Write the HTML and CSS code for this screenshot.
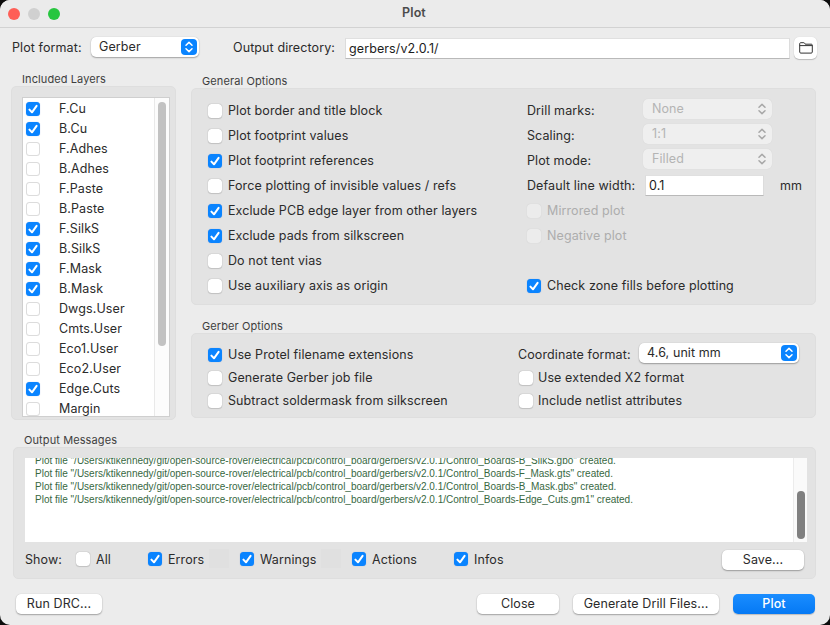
FILE: index.html
```html
<!DOCTYPE html>
<html lang="en">
<head>
<meta charset="utf-8">
<title>Plot</title>
<link rel="stylesheet" href="styles.css">
</head>
<body>
<svg class="defs" width="0" height="0" aria-hidden="true">
  <symbol id="check" viewBox="0 0 14 14"><path d="M3.4 7.6 6 10.3 10.6 3.9" fill="none" stroke="#fff" stroke-width="2" stroke-linecap="round" stroke-linejoin="round"/></symbol>
  <symbol id="updown" viewBox="0 0 16 16"><path d="M5 6.2 8 3.4l3 2.8M5 9.8l3 2.8 3-2.8" fill="none" stroke="currentColor" stroke-width="1.5" stroke-linecap="round" stroke-linejoin="round"/></symbol>
</svg>
<div class="window">
  <header class="titlebar">
    <div class="lights"><i class="light red"></i><i class="light grey"></i><i class="light green"></i></div>
    <div class="title">Plot</div>
  </header>

  <div class="toprow">
    <span class="lbl">Plot format:</span>
    <div class="select format"><span>Gerber</span><b class="stepper"><svg><use href="#updown"/></svg></b></div>
    <span class="lbl outdir">Output directory:</span>
    <div class="input path">gerbers/v2.0.1/</div>
    <div class="folder">
      <svg width="14" height="12" viewBox="0 0 14 12"><path d="M.7 10V1.6c0-.5.4-.9.9-.9h3.2c.4 0 .6.2.8.5l.6 1h6.2c.5 0 .9.4.9.9V10c0 .7-.4 1.1-1.1 1.1H1.8C1.1 11.1.7 10.7.7 10Z M.7 3.6h12.6" fill="none" stroke="#333" stroke-width="1"/></svg>
    </div>
  </div>

  <div class="middle">
    <section class="layers">
      <h2 class="cap">Included Layers</h2>
      <div class="panel layerpanel">
        <div class="list">
          <div class="rows">
            <label class="lrow"><span class="cb on"><svg><use href="#check"/></svg></span><span>F.Cu</span></label>
            <label class="lrow"><span class="cb on"><svg><use href="#check"/></svg></span><span>B.Cu</span></label>
            <label class="lrow"><span class="cb"></span><span>F.Adhes</span></label>
            <label class="lrow"><span class="cb"></span><span>B.Adhes</span></label>
            <label class="lrow"><span class="cb"></span><span>F.Paste</span></label>
            <label class="lrow"><span class="cb"></span><span>B.Paste</span></label>
            <label class="lrow"><span class="cb on"><svg><use href="#check"/></svg></span><span>F.SilkS</span></label>
            <label class="lrow"><span class="cb on"><svg><use href="#check"/></svg></span><span>B.SilkS</span></label>
            <label class="lrow"><span class="cb on"><svg><use href="#check"/></svg></span><span>F.Mask</span></label>
            <label class="lrow"><span class="cb on"><svg><use href="#check"/></svg></span><span>B.Mask</span></label>
            <label class="lrow"><span class="cb"></span><span>Dwgs.User</span></label>
            <label class="lrow"><span class="cb"></span><span>Cmts.User</span></label>
            <label class="lrow"><span class="cb"></span><span>Eco1.User</span></label>
            <label class="lrow"><span class="cb"></span><span>Eco2.User</span></label>
            <label class="lrow"><span class="cb on"><svg><use href="#check"/></svg></span><span>Edge.Cuts</span></label>
            <label class="lrow"><span class="cb"></span><span>Margin</span></label>
          </div>
          <div class="ltrack"><div class="lthumb"></div></div>
        </div>
      </div>
    </section>

    <div class="options">
      <section>
        <h2 class="cap">General Options</h2>
        <div class="panel general">
          <label class="opt"><span class="cb"></span><span>Plot border and title block</span></label>
          <div class="field"><span class="flabel">Drill marks:</span><div class="select off"><span>None</span><svg class="chev"><use href="#updown"/></svg></div></div>
          <label class="opt"><span class="cb"></span><span>Plot footprint values</span></label>
          <div class="field"><span class="flabel">Scaling:</span><div class="select off"><span>1:1</span><svg class="chev"><use href="#updown"/></svg></div></div>
          <label class="opt"><span class="cb on"><svg><use href="#check"/></svg></span><span>Plot footprint references</span></label>
          <div class="field"><span class="flabel">Plot mode:</span><div class="select off"><span>Filled</span><svg class="chev"><use href="#updown"/></svg></div></div>
          <label class="opt"><span class="cb"></span><span>Force plotting of invisible values / refs</span></label>
          <div class="field"><span class="flabel">Default line width:</span><div class="input width">0.1</div><span class="unit">mm</span></div>
          <label class="opt"><span class="cb on"><svg><use href="#check"/></svg></span><span>Exclude PCB edge layer from other layers</span></label>
          <label class="opt dis"><span class="cb"></span><span>Mirrored plot</span></label>
          <label class="opt"><span class="cb on"><svg><use href="#check"/></svg></span><span>Exclude pads from silkscreen</span></label>
          <label class="opt dis"><span class="cb"></span><span>Negative plot</span></label>
          <label class="opt"><span class="cb"></span><span>Do not tent vias</span></label>
          <div></div>
          <label class="opt"><span class="cb"></span><span>Use auxiliary axis as origin</span></label>
          <label class="opt"><span class="cb on"><svg><use href="#check"/></svg></span><span>Check zone fills before plotting</span></label>
        </div>
      </section>
      <section class="gerbersec">
        <h2 class="cap">Gerber Options</h2>
        <div class="panel gerber">
          <label class="opt"><span class="cb on"><svg><use href="#check"/></svg></span><span>Use Protel filename extensions</span></label>
          <div class="field"><span class="cflabel">Coordinate format:</span><div class="select coord"><span>4.6, unit mm</span><b class="stepper"><svg><use href="#updown"/></svg></b></div></div>
          <label class="opt"><span class="cb"></span><span>Generate Gerber job file</span></label>
          <label class="opt shift"><span class="cb"></span><span>Use extended X2 format</span></label>
          <label class="opt"><span class="cb"></span><span>Subtract soldermask from silkscreen</span></label>
          <label class="opt shift"><span class="cb"></span><span>Include netlist attributes</span></label>
        </div>
      </section>
    </div>
  </div>

  <section class="output">
    <h2 class="cap">Output Messages</h2>
    <div class="panel outpanel">
      <div class="log">
        <div class="logtext">
          <p>Plot file "/Users/ktikennedy/git/open-source-rover/electrical/pcb/control_board/gerbers/v2.0.1/Control_Boards-B_SilkS.gbo" created.</p>
          <p>Plot file "/Users/ktikennedy/git/open-source-rover/electrical/pcb/control_board/gerbers/v2.0.1/Control_Boards-F_Mask.gts" created.</p>
          <p>Plot file "/Users/ktikennedy/git/open-source-rover/electrical/pcb/control_board/gerbers/v2.0.1/Control_Boards-B_Mask.gbs" created.</p>
          <p>Plot file "/Users/ktikennedy/git/open-source-rover/electrical/pcb/control_board/gerbers/v2.0.1/Control_Boards-Edge_Cuts.gm1" created.</p>
        </div>
        <div class="otrack"><div class="othumb"></div></div>
      </div>
      <div class="showrow">
        <span class="showlbl">Show:</span>
        <label class="opt sall"><span class="cb"></span><span>All</span></label>
        <label class="opt serr"><span class="cb on"><svg><use href="#check"/></svg></span><span>Errors</span></label>
        <i class="swatch"></i>
        <label class="opt swarn"><span class="cb on"><svg><use href="#check"/></svg></span><span>Warnings</span></label>
        <i class="swatch"></i>
        <label class="opt sact"><span class="cb on"><svg><use href="#check"/></svg></span><span>Actions</span></label>
        <label class="opt"><span class="cb on"><svg><use href="#check"/></svg></span><span>Infos</span></label>
        <button class="btn save">Save...</button>
      </div>
    </div>
  </section>

  <footer class="footer">
    <button class="btn drc">Run DRC...</button>
    <button class="btn close">Close</button>
    <button class="btn drill">Generate Drill Files...</button>
    <button class="btn plot">Plot</button>
  </footer>
</div>
</body>
</html>
```

FILE: styles.css
```css
* { box-sizing: border-box; }
html, body { margin: 0; height: 100%; background: #0c0c0c; overflow: hidden; }
.defs { position: absolute; }
.window {
  width: 830px; height: 625px; background: #ececec; border-radius: 10px; overflow: hidden;
  display: flex; flex-direction: column;
  font: 12.5px/15px Inter, "Liberation Sans", sans-serif; letter-spacing: .1px; color: #2b2b2b;
}
.titlebar {
  height: 28px; flex: none; border-bottom: 1px solid #d2d2d2; background: #ebebeb;
  display: flex; align-items: center; position: relative; padding-left: 8px;
}
.lights { display: flex; gap: 8px; }
.light { width: 12px; height: 12px; border-radius: 50%; display: block; }
.red { background: #fe5f57; }
.grey { background: #d0d0d0; }
.green { background: #27c63f; }
.title { position: absolute; left: 0; right: 2px; top: 5px; text-align: center; font-weight: 600; color: #4b4b4b; }

.toprow { display: flex; align-items: center; height: 23px; margin-top: 8px; padding-left: 12px; flex: none; }
.lbl { flex: none; width: 68px; white-space: nowrap; }
.format { width: 108px; margin-left: 11px; margin-top: -2px; flex: none; }
.toprow .outdir { margin-left: 34px; width: 112px; }
.path { width: 445px; height: 21px; margin-top: 1px; flex: none; padding-left: 2px; }
.folder {
  width: 23px; height: 22px; margin-left: 4px; background: #fff; border-radius: 5px;
  box-shadow: 0 1px 1px rgba(0,0,0,.2), 0 0 1px rgba(0,0,0,.15);
  display: flex; align-items: center; justify-content: center;
}

.select {
  height: 20px; background: #fff; border-radius: 5px; display: flex; align-items: center; justify-content: space-between;
  padding: 0 2px 0 8px; box-shadow: 0 1px 1.5px rgba(0,0,0,.3), 0 0 1px rgba(0,0,0,.2);
}
.select span { margin-bottom: 1px; }
.stepper { width: 16px; height: 16px; background: #0a84ff; border-radius: 4px; color: #fff; display: block; }
.stepper svg { width: 16px; height: 16px; display: block; }
.select.off {
  width: 129px; margin-top: -3px; background: #efefef; color: #b4b4b4; padding: 0 2px 0 9px;
  box-shadow: 0 0 1px rgba(0,0,0,.1);
}
.select.off span { margin-bottom: 2px; }
.chev { width: 16px; height: 16px; color: #a8a8a8; }
.input {
  background: #fff; border: 1px solid #dcdcdc; border-top-color: #e0e0e0; border-bottom-color: #b9b9b9;
  padding-left: 3px; display: flex; align-items: center; color: #1c1c1c;
}

.middle { display: flex; margin-top: 14px; flex: none; }
.cap { margin: 0; font-weight: 400; font-size: 11px; line-height: 13px; color: #3e3e3e; padding-left: 11px; letter-spacing: .1px; }
.panel { background: #e3e3e3; border: 1px solid #dedede; border-radius: 5px; }

.layers { width: 165px; margin-left: 11px; flex: none; }
.layerpanel { height: 334px; padding: 10px 5px 2px 10px; }
.list {
  height: 320px; background: #fff; border: 1px solid #cfcfcf; border-width: 1px 1px 1.5px; overflow: hidden;
  display: flex;
}
.rows { width: 131px; padding-top: 1px; flex: none; }
.lrow { display: flex; align-items: center; height: 20px; padding-left: 3px; }
.lrow .cb { margin-right: 19px; }
.lrow .cb:not(.on) { box-shadow: inset 0 0 0 1px #dcdcdc; }
.lrow span:last-child { margin-bottom: 2px; }
.ltrack { flex: 1; border-left: 1px solid #e9e9e9; background: #fcfcfc; padding: 4px 0 0 3px; }
.lthumb { width: 8px; height: 244px; border-radius: 4px; background: #c2c2c2; }

.options { width: 625px; margin-left: 15px; padding-top: 2px; flex: none; }
.general {
  height: 217px; padding: 9px 0 0 16px; display: grid;
  grid-template-columns: 319px 1fr; grid-auto-rows: 25px; align-items: center;
}
.gerbersec { margin-top: 15px; }
.gerber {
  height: 85px; padding: 9px 0 0 16px; display: grid;
  grid-template-columns: 310px 1fr; grid-auto-rows: 23px; align-items: center;
}
.opt { display: flex; align-items: center; gap: 6px; white-space: nowrap; }
.dis { color: #adadad; }
.dis .cb { background: #ececec; box-shadow: 0 0 1px rgba(0,0,0,.15); }
.shift { margin-left: 1px; gap: 5px; }
.field { display: flex; align-items: center; white-space: nowrap; }
.flabel { width: 116px; flex: none; }
.width { width: 119px; height: 21px; margin-left: 2px; }
.unit { margin-left: 16px; }
.cflabel { width: 121px; flex: none; }
.coord { width: 160px; margin-top: -3px; }

.cb {
  width: 14px; height: 14px; border-radius: 3.5px; background: #fff; flex: none; display: block;
  box-shadow: 0 0 1px rgba(0,0,0,.35), 0 .5px 1px rgba(0,0,0,.12);
}
.cb.on { background: #0a84ff; box-shadow: 0 0 1px rgba(0,70,180,.4); }
.cb svg { width: 14px; height: 14px; display: block; }

.output { margin: 14px 14px 0 13px; flex: none; }
.outpanel { height: 132px; padding: 10px 8px 0 11px; }
.log { height: 84px; background: #fff; display: flex; overflow: hidden; }
.logtext { flex: 1; overflow: hidden; padding: 0 0 0 10px; margin-top: -4px; font: 10px/13px "Liberation Sans", Arial, sans-serif; letter-spacing: 0; color: #37683f; white-space: nowrap; }
.logtext p { margin: 0; }
.otrack { width: 14px; flex: none; border-left: 1px solid #ececec; background: #fafafa; padding: 33px 0 0 3px; }
.othumb { width: 8px; height: 48px; border-radius: 4px; background: #808080; }
.showrow { display: flex; align-items: center; height: 20px; margin-top: 8px; padding-right: 3px; }
.showlbl { width: 51px; flex: none; margin-bottom: 2px; }
.showrow .opt { margin-bottom: 2px; }
.sall { width: 72px; }
.serr { width: 61px; }
.swarn { width: 81px; }
.sact { width: 102px; }
.swatch { width: 20px; height: 19px; background: #e0e0e0; margin: 0 11px 3px 0; display: block; }
.save { width: 82px; margin-left: auto; }

.btn {
  height: 20px; border: 0; border-radius: 5px; background: #fff; padding: 0 0 1px; color: #2b2b2b;
  font: inherit; letter-spacing: inherit; box-shadow: 0 1px 1.5px rgba(0,0,0,.3), 0 0 1px rgba(0,0,0,.2);
}
.footer { display: flex; align-items: center; margin-top: 15px; padding-left: 16px; flex: none; }
.drc { width: 86px; }
.close { width: 82px; margin-left: auto; }
.drill { width: 146px; margin-left: 14px; }
.plot { width: 82px; margin-left: 14px; margin-right: 15px; color: #fff; font-weight: 500; background: linear-gradient(#1a8dff, #0579f4); box-shadow: 0 1px 1px rgba(0,0,0,.2); }
```
